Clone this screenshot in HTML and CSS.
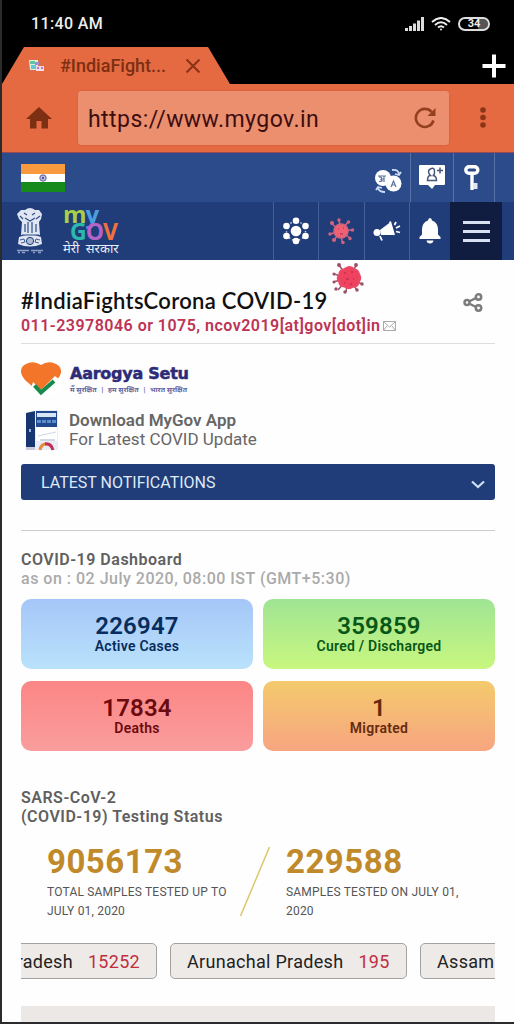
FILE: index.html
```html
<!DOCTYPE html>
<html lang="en">
<head>
    <meta charset="utf-8">
    <meta name="viewport" content="width=device-width, initial-scale=1">
    <title>#IndiaFightsCorona COVID-19</title>
    <link rel="stylesheet" href="styles.css">
</head>
<body>
<div class="phone">

    <div class="status">
        <span class="clock">11:40 AM</span>
        <svg class="signal" width="20" height="14" viewBox="0 0 20 14" fill="#ddd">
            <path d="M0 11h3v3H0zM4 9h3v5H4zM8 6.500h3V14H8zM12 3.500h3V14h-3zM16 0h3v14h-3z"/>
        </svg>
        <svg class="wifi" width="20" height="14" viewBox="0 0 20 14" fill="none" stroke="#eee" stroke-width="2">
            <path d="M1 5Q10-3 19 5M4 8Q10 2.500 16 8M7 10.500Q10 8 13 10.500"/>
            <circle cx="10" cy="12.500" r="1" fill="#eee" stroke="none"/>
        </svg>
        <span class="battery">34</span>
    </div>

    <div class="tabs">
        <div class="tab">
            <svg class="favicon" width="17" height="14" viewBox="0 0 17 14">
                <path d="M1 1h9v10H2z" fill="#d8f0dc"/>
                <path d="M2 2h5v3H2z" fill="#62c4a0"/>
                <path d="M3 6h5v4H3z" fill="#67c7d9"/>
                <path d="M7 3h4v3H7z" fill="#9c8fd8"/>
                <path d="M8 7h8v5H8z" fill="#f3dce6"/>
                <path d="M9 8h2v2H9zM13 8h2v2h-2z" fill="#b97cc8"/>
            </svg>
            <span class="tab-title">#IndiaFight...</span>
            <svg class="close" width="16" height="16" viewBox="0 0 16 16" stroke="#8a3116" stroke-width="2">
                <path d="M1.500 1.500l13 13M14.500 1.500l-13 13"/>
            </svg>
        </div>
        <svg class="plus" width="24" height="24" viewBox="0 0 24 24" stroke="#fff" stroke-width="4">
            <path d="M12 .5v23M.5 12h23"/>
        </svg>
    </div>

    <div class="toolbar">
        <svg class="home" width="26" height="22" viewBox="0 0 26 22" fill="#7c2f12">
            <path d="M13 0L0 12h4v9.500h6.500V14h5v7.500H22V12h4z"/>
        </svg>
        <div class="url">
            <span class="address">https://www.mygov.in</span>
            <svg width="22" height="22" viewBox="0 0 22 22" fill="none" stroke="#94401f" stroke-width="2.600">
                <path d="M19.500 13.500A9 9 0 1 1 17.500 4.800"/>
                <path d="M21.500 1v8h-8z" fill="#94401f" stroke="none"/>
            </svg>
        </div>
        <svg class="dots" width="6" height="22" viewBox="0 0 6 22" fill="#8a3518">
            <circle cx="3" cy="3" r="2.800"/><circle cx="3" cy="10.500" r="2.800"/><circle cx="3" cy="18" r="2.800"/>
        </svg>
    </div>

    <div class="topbar">
        <svg class="flag" width="44" height="28" viewBox="0 0 44 28">
            <path d="M0 0h44v10H0z" fill="#f99a3e"/>
            <path d="M0 10h44v8H0z" fill="#fff"/>
            <path d="M0 18h44v10H0z" fill="#178a1c"/>
            <circle cx="22" cy="14" r="3.200" fill="#b8bddb" stroke="#5b63a0"/>
            <circle cx="22" cy="14" r="1" fill="#33397e"/>
        </svg>
        <div class="top-cell lang">
            <svg width="28" height="26" viewBox="0 0 28 26">
                <circle cx="9" cy="10" r="8" fill="#fff"/>
                <circle cx="19.500" cy="15.500" r="8" fill="#fff"/>
                <path d="M4 8h8M10 8v6M5 9q4 0 2 2.500q3 2-2 2M7 11h3M17 19l2.500-6 2.500 6M18 17h3" fill="none" stroke="#5d73a2" stroke-width="1.200"/>
                <path d="M18 2q6-1 7 4m2-2l-2 3-4-1M11 24q-6 0-7-4m-2 2l2-3 4 1" fill="none" stroke="#cbdcf6" stroke-width="1.800"/>
            </svg>
        </div>
        <div class="top-cell register">
            <svg width="28" height="25" viewBox="0 0 28 25">
                <path d="M2 0h24q1 0 1 1v18q0 1-1 1h-9l-3 4-4-4H2q-1 0-1-1V1q0-1 1-1z" fill="#fff"/>
                <path d="M9.500 15.500q0-5 3-5-2-2-2-4t3-3 3 3-2 4q4 0 4 5zM19 5.500h6M22 2.500v6" fill="none" stroke="#46557d" stroke-width="1.500"/>
            </svg>
        </div>
        <div class="top-cell login">
            <svg width="16" height="26" viewBox="0 0 16 26" fill="none" stroke="#fff">
                <rect x="1.800" y="1.800" width="12" height="6.500" rx="3.200" stroke-width="3.400"/>
                <path d="M8 9v16" stroke-width="3.400"/>
                <path d="M9 18h4.500v6H9" fill="#dfe6f4" stroke="none"/>
            </svg>
        </div>
    </div>

    <div class="navbar">
        <svg class="emblem" width="28" height="48" viewBox="0 0 28 48" fill="#dfe5f1">
            <path d="M9 3q5-4 10 0l4 0 3 4-1 5-2 3 1 13H5L6 15 3 12 1 7l4-4z"/>
            <path d="M3 30q11-5 22 0l1 7q-12 5-24 0z"/>
            <path d="M8 6l3 2M16 8l3-2M4 9l3 3M24 9l-4 3M9 11l5 3 5-3M9 17v8M12 15v11M16 15v11M20 17v8M6 28h17" fill="none" stroke="#304e89" stroke-width="1.200"/>
            <circle cx="14" cy="34" r="3.600" fill="#aebbd5" stroke="#203d79"/>
            <path d="M4 33l4-1 1 3-4 1M24 33l-4-1-1 3 4 1" fill="none" stroke="#3d5891"/>
            <path d="M1 43.500h12M15 43.500h12M2 45.500h2M6 45.500h3M17 45.500h2M22 45.500h3" stroke="#8fa0c6" stroke-width="1.300"/>
        </svg>
        <div class="logo">
            <div class="logo-my"><span class="m">m</span><span class="y">y</span></div>
            <div class="logo-gov"><span class="g">G</span><span class="o">O</span><span class="v">V</span></div>
            <div class="logo-hindi">मेरी सरकार</div>
        </div>
        <div class="nav-icons">
            <div class="nav-cell">
                <svg width="28" height="28" viewBox="0 0 28 28" fill="#fff">
                    <circle cx="14" cy="14" r="9.500" fill="none" stroke="#c8d3e8" stroke-width="1.500" stroke-dasharray="1.500 2"/>
                    <circle cx="14" cy="14" r="5.300"/><circle cx="14" cy="3.800" r="3.300"/><circle cx="14" cy="24" r="3.300"/>
                    <circle cx="4.500" cy="9" r="3.300"/><circle cx="23.500" cy="9" r="3.300"/><circle cx="4.500" cy="19" r="3.300"/><circle cx="23.500" cy="19" r="3.300"/>
                </svg>
            </div>
            <div class="nav-cell">
                <svg width="28" height="28" viewBox="0 0 28 28" stroke="#d0647f" stroke-width="1.500" fill="#d0647f">
                    <path d="M14 14L12 3M14 14l7-9M14 14l11-1M14 14l9 7M14 14l1 11M14 14l-7 9M14 14L3 17M14 14L5 7M4 3h.1"/>
                    <circle cx="14" cy="14" r="7" fill="#f16073"/>
                    <circle cx="12" cy="3" r="1"/><circle cx="21.500" cy="5" r="1"/><circle cx="25.500" cy="13" r="1"/><circle cx="23" cy="21.500" r="1"/>
                    <circle cx="16" cy="25.500" r="1"/><circle cx="7" cy="23" r="1.300"/><circle cx="3" cy="17" r="1"/><circle cx="5" cy="6" r="1.300"/>
                    <path d="M11 12h1M16 11h1M13 17h3" stroke="#bb405d"/>
                </svg>
            </div>
            <div class="nav-cell">
                <svg width="28" height="24" viewBox="0 0 28 24" fill="#fff">
                    <circle cx="4" cy="13.500" r="3.500"/>
                    <path d="M7 11l10-7.500 3.500 12.500L8 16z"/>
                    <path d="M17 2.500l4 13.500" stroke="#fff" stroke-width="2"/>
                    <path d="M7 17l2 4.500M21.500 6L23 3M23 9l4-2M23 12.500l4 1" fill="none" stroke="#fff" stroke-width="1.800"/>
                </svg>
            </div>
            <div class="nav-cell bell">
                <svg width="22" height="26" viewBox="0 0 22 26" fill="#fff">
                    <path d="M11 0q1.800 0 2 2.500Q19 4.500 19 12v4.500l2.500 2.500v2H.5v-2L3 16.500V12q0-7.500 6-9.500Q9.200 0 11 0zM7.500 22.500h7q-.5 3-3.500 3t-3.500-3z"/>
                </svg>
            </div>
            <div class="nav-cell menu"><span></span><span></span><span></span></div>
        </div>
    </div>

    <div class="content">
        <div class="title-row">
            <h1>#IndiaFightsCorona COVID-19</h1>
            <svg class="virus" width="34" height="32" viewBox="0 0 34 32" stroke="#9c5168" stroke-width="1.500" fill="#87536a">
                <path d="M17 16L8 3M17 16V6M17 16l8-12M17 16L3 12M17 16L2 20M17 16L7 28M17 16l-2 14M17 16l9 12M17 16l14 6M17 16l12-4"/>
                <path d="M17 5q4-1 6 2 5 1 5 5 3 4 0 8-1 5-6 5-4 3-8 0-6-1-6-5-3-4 0-7 0-5 5-6z" fill="#ef4160" stroke="#e94d68"/>
                <circle cx="8" cy="3" r="1.200"/><circle cx="25" cy="3" r="1.200"/><circle cx="3" cy="12" r=".8"/><circle cx="3" cy="20" r=".8"/>
                <circle cx="5" cy="27" r="1"/><circle cx="14" cy="30" r="1"/><circle cx="26" cy="28" r="1"/><circle cx="31" cy="22" r="1"/>
                <path d="M13 11h2M20 10h2M15 17h3M22 17h1M13 21h1M19 22h2" stroke="#ca2d4b"/>
            </svg>
            <svg class="share" width="20" height="19" viewBox="0 0 20 19" fill="none" stroke="#7c7c7c" stroke-width="2.500">
                <path d="M6 8.500l7-3.500M6 10.500l7 3.500"/>
                <circle cx="4" cy="9.500" r="2.500"/><circle cx="15.500" cy="4" r="2.700"/><circle cx="15.500" cy="15" r="2.700"/>
            </svg>
        </div>
        <div class="helpline">
            <span>011-23978046 or 1075, ncov2019[at]gov[dot]in</span>
            <svg width="13" height="10" viewBox="0 0 13 10" fill="none" stroke="#aaa">
                <path d="M.5.5h12v9H.5zM.5.5l6 5.500 6-5.500M.5 9.500L4 5M12.500 9.500L9 5"/>
            </svg>
        </div>

        <div class="app-row setu">
            <svg width="40" height="34" viewBox="0 0 40 34">
                <path d="M20 32L4 18Q-3 10 2 4 11-3 20 3q9-6 18 1 5 6-2 14z" fill="#f37529"/>
                <path d="M12 20l8 8 14-14 5 4v15H8z" fill="#fff"/>
                <path d="M13.500 23.500l6.500 7L33 19" fill="none" stroke="#16894d" stroke-width="4"/>
            </svg>
            <div>
                <div class="setu-name">Aarogya Setu</div>
                <div class="setu-sub"><span>मैं सुरक्षित</span><i>|</i><span>हम सुरक्षित</span><i>|</i><span>भारत सुरक्षित</span></div>
            </div>
        </div>
        <div class="app-row download">
            <svg width="34" height="43" viewBox="0 0 34 43">
                <path d="M1 4l9-2v38H1z" fill="#17366f"/>
                <path d="M1 38h9v3H1z" fill="#c6cbd5"/>
                <path d="M4 20h2v3H4z" fill="#9ab4e0"/>
                <path d="M10 2q0-1 1-1h21q1 0 1 1v39H10z" fill="#e9edf5"/>
                <path d="M11 2h21v16H11z" fill="#204a8d"/>
                <path d="M12 4h19v4H12z" fill="#dae5f4"/>
                <path d="M12 11h4v3h-4zM17 11h4v3h-4zM22 11h4v3h-4zM27 11h4v3h-4z" fill="#5d8dcc"/>
                <path d="M11 18h21v14H11z" fill="#fff"/>
                <path d="M13 27l18-4" stroke="#ced7e6"/>
                <path d="M15 31h15" stroke="#a6b2c6"/>
                <path d="M15 41q1-6 6-6" fill="none" stroke="#e68b3d" stroke-width="3"/>
                <path d="M20 35q6-1 8 6" fill="none" stroke="#c22e57" stroke-width="3"/>
            </svg>
            <div class="download-text"><b>Download MyGov App</b><span>For Latest COVID Update</span></div>
        </div>

        <div class="notifications">
            <span>LATEST NOTIFICATIONS</span>
            <svg width="14" height="9" viewBox="0 0 14 9" fill="none" stroke="#cfe0f5" stroke-width="2.200"><path d="M1 1.500l6 5.500 6-5.500"/></svg>
        </div>

        <div class="dash-head">
            <h2>COVID-19 Dashboard</h2>
            <p>as on : 02 July 2020, 08:00 IST (GMT+5:30)</p>
        </div>
        <div class="cards">
            <div class="card active"><strong>226947</strong><span>Active Cases</span></div>
            <div class="card cured"><strong>359859</strong><span>Cured / Discharged</span></div>
            <div class="card deaths"><strong>17834</strong><span>Deaths</span></div>
            <div class="card migrated"><strong>1</strong><span>Migrated</span></div>
        </div>

        <h2 class="testing-head">SARS-CoV-2<br>(COVID-19) Testing Status</h2>
        <div class="testing">
            <div class="sample total"><strong>9056173</strong><p>TOTAL SAMPLES TESTED UP TO<br>JULY 01, 2020</p></div>
            <svg width="32" height="71" viewBox="0 0 32 71" stroke="#dcc56a" stroke-width="1.500"><path d="M29.500 1L.5 70"/></svg>
            <div class="sample daily"><strong>229588</strong><p>SAMPLES TESTED ON JULY 01,<br>2020</p></div>
        </div>

        <div class="ticker">
            <div class="state first"><span>Andhra Pradesh</span><em>15252</em></div>
            <div class="state middle"><span>Arunachal Pradesh</span><em>195</em></div>
            <div class="state last"><span>Assam</span></div>
        </div>
        <div class="panel"></div>
    </div>
</div>
</body>
</html>
```
FILE: styles.css
```css
* {
    box-sizing: border-box;
}

body, html {
    margin: 0;
    padding: 0;
    background-color: #2b2a2d;
    font-family: Roboto, "Noto Sans", sans-serif;
}

body {
    width: 514px;
    height: 1024px;
    padding: 0 0 2px 2px;
    overflow: hidden;
}

svg {
    display: block;
    flex: none;
}

h1, h2, p {
    margin: 0;
}

.phone {
    height: 1022px;
    background: #fefefe;
    overflow: hidden;
}

/* browser */
.status {
    height: 47px;
    background: #000;
    display: flex;
    align-items: center;
    padding-left: 29px;
    color: #eee;
}

.clock {
    font-size: 16px;
    font-weight: 500;
    letter-spacing: .35px;
    width: 374px;
}

.wifi {
    margin: 0 7px 0 6px;
}

.battery {
    width: 32px;
    height: 14px;
    border: 2px solid #ddd;
    border-radius: 8px;
    background: linear-gradient(90deg, #000 65%, #555 65%) padding-box;
    font-size: 11px;
    font-weight: bold;
    line-height: 10px;
    text-align: center;
}

.tabs {
    height: 37px;
    background: #000;
    display: flex;
    justify-content: space-between;
    padding-right: 8px;
}

.tab {
    width: 228px;
    background: #e66a41;
    clip-path: polygon(22px 0, 206px 0, 228px 100%, 0 100%);
    display: flex;
    align-items: center;
    padding-left: 26px;
}

.tab-title {
    width: 125px;
    margin-left: 15px;
    padding-bottom: 1px;
    color: #7c2f12;
    font-size: 18px;
    font-weight: 500;
    letter-spacing: 0;
}

.plus {
    margin-top: 7px;
}

.toolbar {
    height: 69px;
    background: #e66a41;
    border-bottom: 1px solid #9c4a52;
    display: flex;
    align-items: center;
    padding-left: 24px;
}

.url {
    width: 371px;
    height: 54px;
    margin: 0 31px 0 26px;
    padding: 0 13px 0 10px;
    border-radius: 3px;
    background: #eb8f6e;
    box-shadow: 0 0 2px #c75a35;
    display: flex;
    align-items: center;
    justify-content: space-between;
    color: #3d0e10;
    font-size: 23px;
    letter-spacing: .45px;
}

.address {
    padding-top: 2px;
}

/* site header */
.topbar {
    height: 49px;
    background: #2c4b8a;
    display: flex;
    align-items: center;
    padding: 0 19px;
}

.flag {
    margin-right: auto;
}

.top-cell {
    height: 100%;
    border-right: 1px solid #5770a5;
    display: flex;
    align-items: center;
    justify-content: center;
}

.lang {
    width: 46px;
    padding-top: 6px;
}

.register {
    width: 43px;
}

.login {
    width: 41px;
    padding-right: 4px;
}

.navbar {
    height: 58px;
    background: #203d79;
    display: flex;
    align-items: center;
    padding-left: 14px;
}

.logo {
    width: 60px;
    height: 58px;
    margin-left: 19px;
    font-weight: bold;
    font-family: "Open Sans", "Noto Sans", sans-serif;
}

.logo-my {
    height: 18px;
    font-size: 24px;
    line-height: 24px;
    letter-spacing: -1px;
}

.logo-gov {
    height: 21px;
    padding-left: 7px;
    font-size: 23px;
    line-height: 22px;
    letter-spacing: -1px;
}

.m { color: #a8cf45; }
.y { color: #4a9fe0; }
.g { color: #2bb8ad; }
.o { color: #b663c8; }
.v { color: #f0713c; }

.logo-hindi {
    color: #e8edf7;
    font-size: 13px;
    font-weight: normal;
    line-height: 15px;
    word-spacing: 3px;
    white-space: nowrap;
}

.nav-icons {
    height: 100%;
    display: flex;
    margin-left: auto;
    margin-right: 12px;
}

.nav-cell {
    width: 45.5px;
    border-left: 1px solid #46609a;
    display: flex;
    align-items: center;
    justify-content: center;
}

.bell {
    width: 41px;
}

.menu {
    width: 52px;
    border: 0;
    background: #111d40;
    flex-direction: column;
    gap: 6px;
}

.menu span {
    width: 27px;
    height: 3px;
    background: #d7e1f2;
}

/* page */
.content {
    padding: 0 19px;
}

.title-row {
    height: 52px;
    display: flex;
    position: relative;
    padding-top: 28px;
}

h1 {
    font-family: Lato, sans-serif;
    font-size: 22px;
    font-weight: 600;
    line-height: 26px;
    letter-spacing: .3px;
    white-space: nowrap;
    color: #111;
}

.virus {
    position: absolute;
    left: 310px;
    top: 2px;
}

.share {
    margin: 5px 12px 0 auto;
}

.helpline {
    height: 32px;
    border-bottom: 1px solid #ddd;
    display: flex;
    gap: 3px;
    color: #bd3454;
    font-size: 16px;
    font-weight: 600;
    line-height: 28px;
    letter-spacing: .48px;
    white-space: nowrap;
}

.helpline svg {
    margin-top: 9px;
}

.app-row {
    display: flex;
}

.setu {
    height: 65px;
    padding-top: 18px;
    gap: 9px;
}

.setu-name {
    width: 118px;
    color: #2d2b77;
    font-family: "DejaVu Sans", sans-serif;
    font-size: 16px;
    font-weight: bold;
    line-height: 23px;
    letter-spacing: -.25px;
    -webkit-text-stroke: .5px #2d2b77;
    white-space: nowrap;
}

.setu-sub {
    display: flex;
    justify-content: space-between;
    width: 117px;
    color: #62609a;
    font-size: 7px;
    font-weight: bold;
    line-height: 10px;
    white-space: nowrap;
}

.setu-sub i {
    font-style: normal;
}

.download {
    height: 55px;
    padding: 0 0 0 4px;
    gap: 10px;
}

.download-text {
    display: flex;
    flex-direction: column;
    padding-top: 2px;
    color: #666;
    font-size: 17px;
    line-height: 19px;
}

.download-text b {
    font-weight: 600;
}

.notifications {
    height: 36px;
    border-radius: 3px;
    background: #203d79;
    display: flex;
    align-items: center;
    justify-content: space-between;
    padding: 0 10px 0 20px;
    color: #dfe9f7;
    font-size: 16px;
}

.notifications svg {
    margin-top: 4px;
}

.dash-head {
    height: 69px;
    margin-top: 30px;
    padding-top: 19px;
    border-top: 1px solid #ccc;
}

h2, .dash-head p {
    color: #606060;
    font-size: 16px;
    font-weight: 600;
    line-height: 19px;
    letter-spacing: .5px;
}

.dash-head p {
    color: #aaa;
    font-weight: 500;
}

.cards {
    display: grid;
    grid-template-columns: 232px 232px;
    grid-auto-rows: 70px;
    gap: 12px 10px;
}

.card {
    border-radius: 10px;
    display: flex;
    flex-direction: column;
    align-items: center;
    padding-top: 15px;
}

.card strong {
    font-size: 24px;
    font-weight: 600;
    line-height: 25px;
    letter-spacing: .2px;
}

.card span {
    font-size: 14px;
    font-weight: 600;
    line-height: 15px;
    letter-spacing: .25px;
}

.active {
    background: linear-gradient(#a5c6f8, #bae2fb);
    color: #082d5c;
}

.cured {
    background: linear-gradient(#9fe494, #c9f77f);
    color: #075716;
}

.deaths {
    background: linear-gradient(#fb8685, #fa9d9d);
    color: #6c0a0f;
}

.migrated {
    background: linear-gradient(#f4ca6d, #f7a580);
    color: #662b0e;
}

.testing-head {
    margin-top: 37px;
}

.testing {
    height: 97px;
    margin-top: 20px;
    padding-left: 26px;
    display: flex;
}

.total {
    width: 193px;
}

.daily {
    margin-left: 14px;
}

.sample strong {
    display: block;
    color: #c08a2a;
    font-size: 33px;
    font-weight: bold;
    line-height: 32px;
    letter-spacing: .5px;
}

.sample p {
    margin-top: 5px;
    color: #555;
    font-size: 12px;
    line-height: 19px;
    letter-spacing: .2px;
    white-space: nowrap;
}

.ticker {
    height: 36px;
    display: flex;
    gap: 13px;
    overflow: hidden;
}

.state {
    flex: none;
    border: 1px solid #a2a2a2;
    border-radius: 5px;
    background: #edeae8;
    display: flex;
    align-items: center;
    gap: 15px;
    padding: 0 16px;
    color: #222;
    font-size: 18px;
    letter-spacing: .3px;
    white-space: nowrap;
}

.state em {
    color: #bf2f40;
    font-style: normal;
}

.first {
    width: 220px;
    margin-left: -84px;
    justify-content: flex-end;
}

.middle {
    width: 237px;
}

.last {
    width: 140px;
}

.panel {
    height: 20px;
    margin-top: 27px;
    background: #ece8e5;
}
```
